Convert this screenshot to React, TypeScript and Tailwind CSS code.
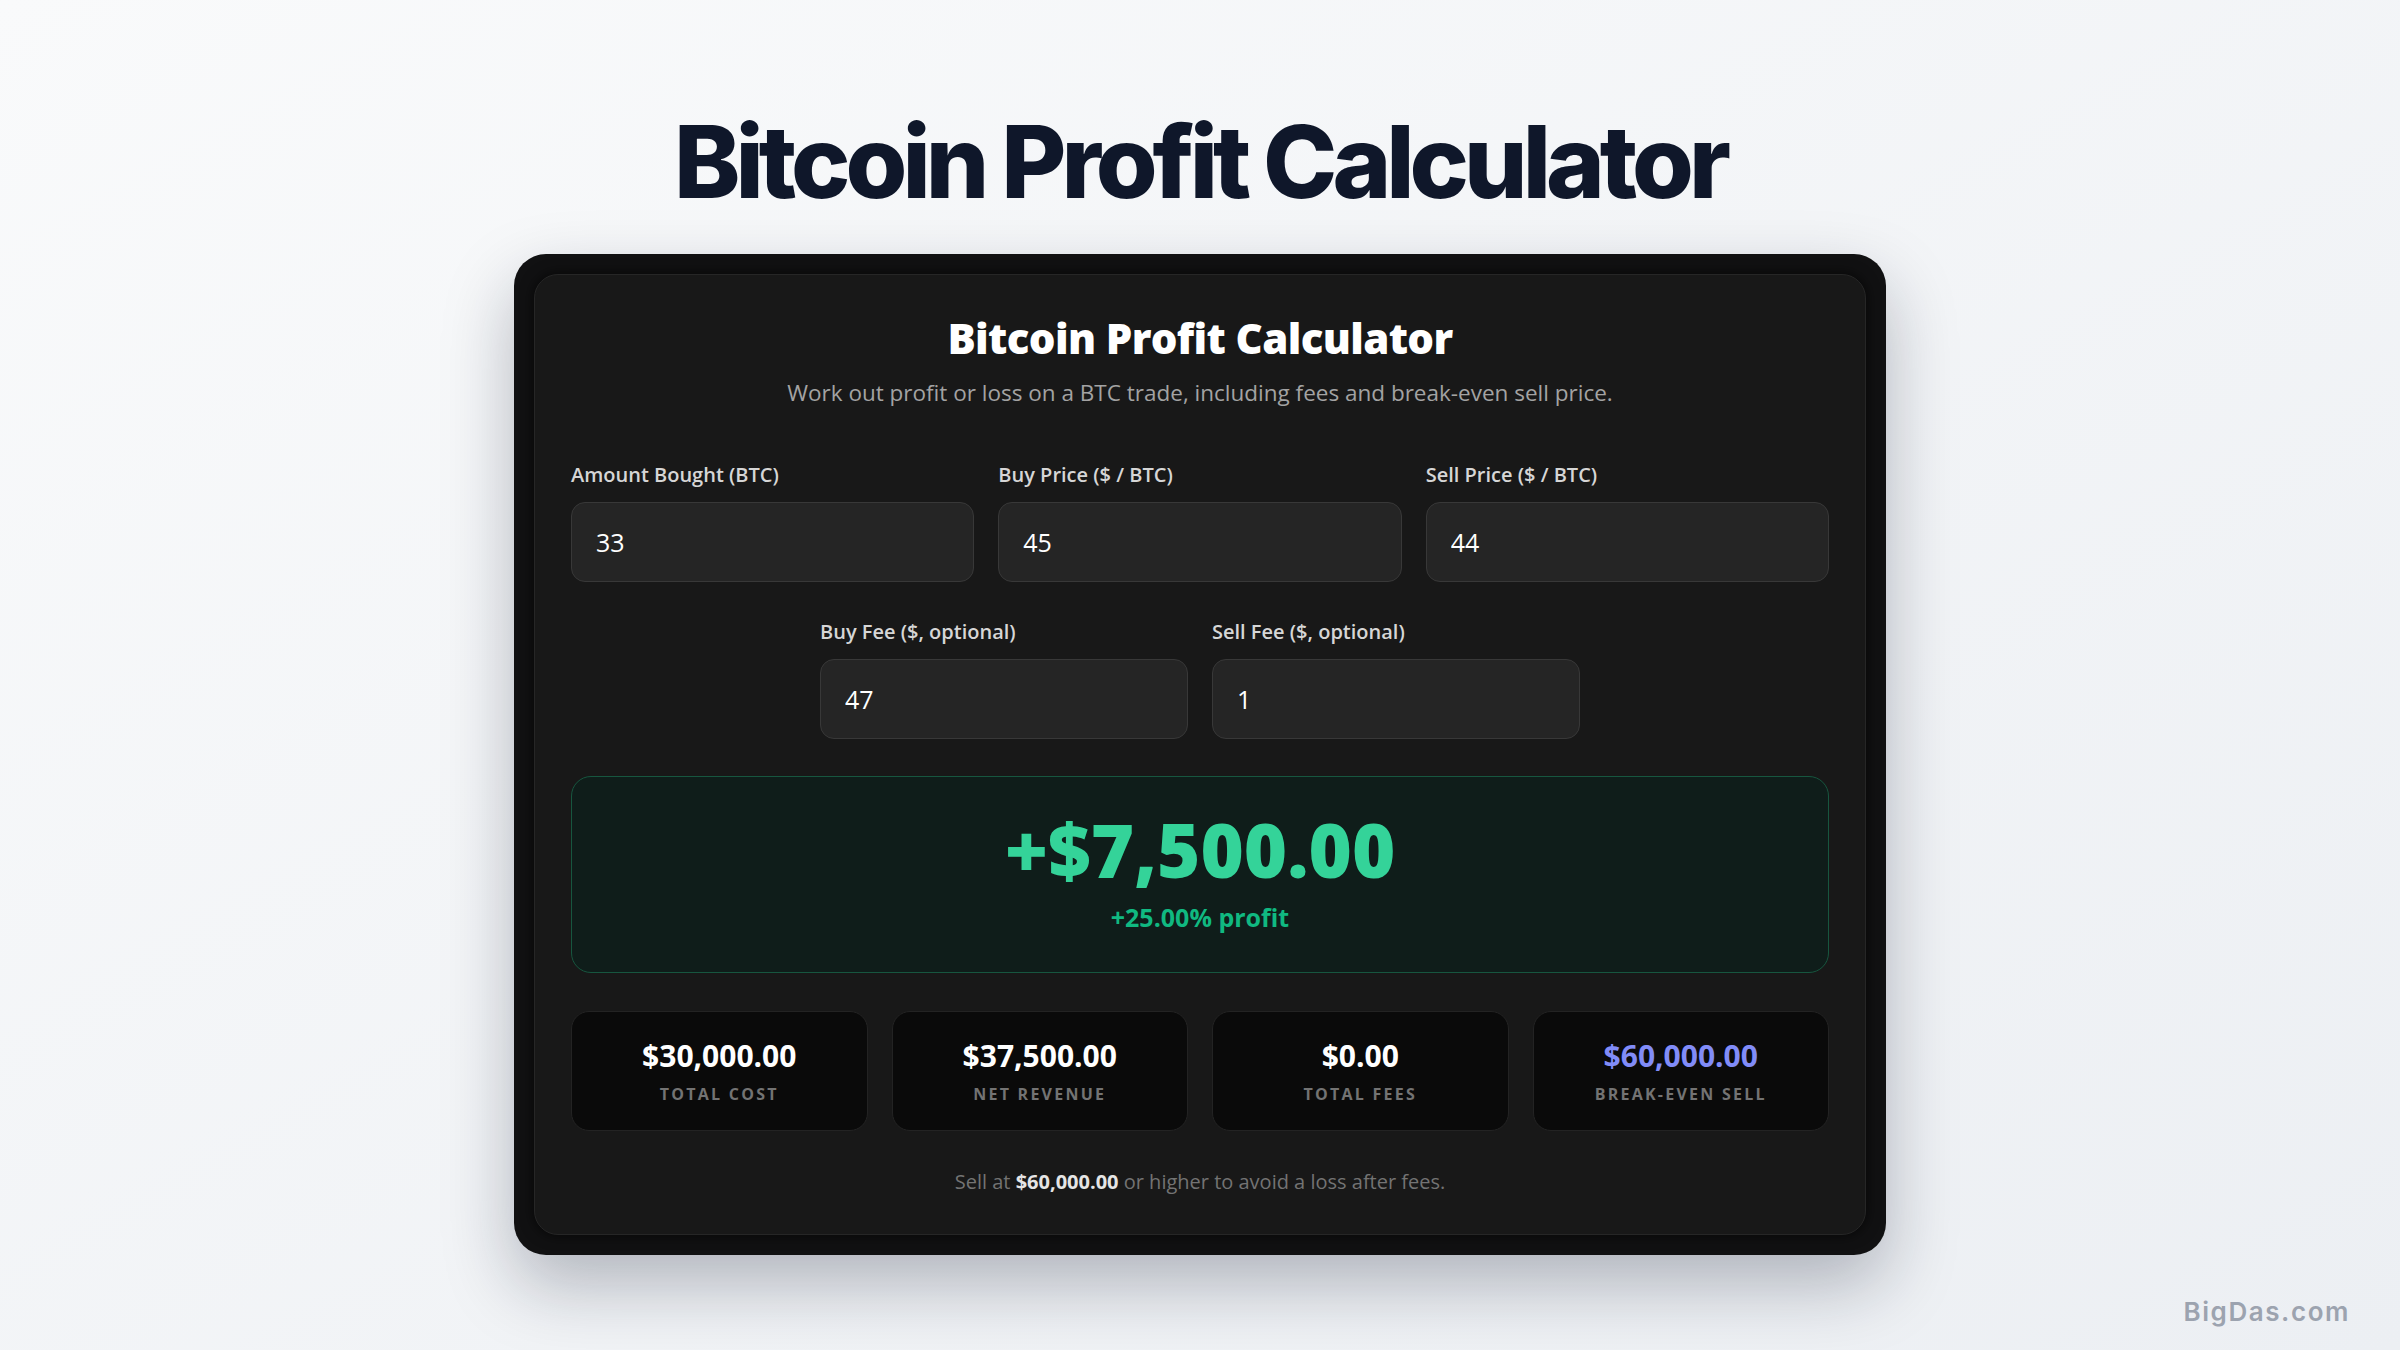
import React from 'react';

const topFields = [
  { label: 'Amount Bought (BTC)', value: '33' },
  { label: 'Buy Price ($ / BTC)', value: '45' },
  { label: 'Sell Price ($ / BTC)', value: '44' },
];

const feeFields = [
  { label: 'Buy Fee ($, optional)', value: '47' },
  { label: 'Sell Fee ($, optional)', value: '1' },
];

const stats = [
  { value: '$30,000.00', label: 'Total Cost', accent: false },
  { value: '$37,500.00', label: 'Net Revenue', accent: false },
  { value: '$0.00', label: 'Total Fees', accent: false },
  { value: '$60,000.00', label: 'Break-even Sell', accent: true },
];

function Field({ label, value }: { label: string; value: string }) {
  return (
    <label className="flex flex-col">
      <span className="mb-[13px] text-[20px] leading-[28px] font-semibold text-[#d6d6d6]">
        {label}
      </span>
      <input
        type="text"
        defaultValue={value}
        className="h-[80px] w-full rounded-[14px] border border-[#383838] bg-[#252525] px-6 text-[25px] text-white outline-none focus:border-[#4b5563]"
      />
    </label>
  );
}

export default function App() {
  return (
    <div
      className="relative flex min-h-screen w-full flex-col items-center bg-gradient-to-br from-[#f9fafb] to-[#eceff3] pb-24"
      style={{ fontFamily: '"Open Sans", "Noto Sans", sans-serif' }}
    >
      {/* Page title */}
      <h1
        className="mt-[112px] text-[100px] leading-none font-extrabold tracking-[-0.05em] text-[#0f172a]"
        style={{ fontFamily: 'Inter, "Noto Sans", sans-serif' }}
      >
        Bitcoin Profit Calculator
      </h1>

      {/* Device frame */}
      <div className="mt-[42px] w-[1372px] rounded-[32px] bg-[#111112] p-5 shadow-[0_30px_70px_rgba(15,23,42,0.28)]">
        <div className="rounded-[24px] border border-[#262626] bg-[#181818] px-9 pt-[38px] pb-[38px] shadow-[0_0_14px_rgba(0,0,0,0.7)]">
          <h2 className="text-center text-[42px] leading-[1.2] font-extrabold tracking-[-0.015em] text-white">
            Bitcoin Profit Calculator
          </h2>
          <p className="mt-[14px] text-center text-[22.5px] leading-[1.45] text-[#a3a3a3]">
            Work out profit or loss on a BTC trade, including fees and break-even sell price.
          </p>

          {/* Inputs */}
          <div className="mt-[51px] grid grid-cols-3 gap-6">
            {topFields.map((f) => (
              <Field key={f.label} label={f.label} value={f.value} />
            ))}
          </div>
          <div className="mx-auto mt-9 grid max-w-[760px] grid-cols-2 gap-6">
            {feeFields.map((f) => (
              <Field key={f.label} label={f.label} value={f.value} />
            ))}
          </div>

          {/* Result */}
          <div className="mt-[37px] flex h-[197px] flex-col items-center rounded-[20px] border border-[#17563f] bg-[#0f1d1a] pt-[36px]">
            <div className="text-[74px] leading-none font-extrabold text-[#34d399]">+$7,500.00</div>
            <div className="mt-[12px] text-[25px] leading-[1.45] font-bold text-[#10b981]">+25.00% profit</div>
          </div>

          {/* Stats */}
          <div className="mt-[38px] grid grid-cols-4 gap-6">
            {stats.map((s) => (
              <div
                key={s.label}
                className="flex h-[120px] flex-col items-center rounded-[18px] border border-[#232323] bg-[#0a0a0a] pt-[26px]"
              >
                <div
                  className={
                    s.accent
                      ? 'text-[30px] leading-[1.2] font-bold text-[#818cf8]'
                      : 'text-[30px] leading-[1.2] font-bold text-white'
                  }
                >
                  {s.value}
                </div>
                <div className="mt-[8px] text-[16px] leading-[1.5] font-bold tracking-[0.14em] text-[#737373] uppercase">
                  {s.label}
                </div>
              </div>
            ))}
          </div>

          <p className="mt-9 text-center text-[20px] leading-[1.45] text-[#737373]">
            Sell at <span className="font-bold text-[#e5e5e5]">$60,000.00</span> or higher to avoid a loss after fees.
          </p>
        </div>
      </div>

      {/* Watermark */}
      <div
        className="absolute right-[50px] bottom-[20px] text-[26px] font-semibold tracking-[0.06em] text-[#9ca3af]"
        style={{ fontFamily: 'Inter, "Noto Sans", sans-serif' }}
      >
        BigDas.com
      </div>
    </div>
  );
}
